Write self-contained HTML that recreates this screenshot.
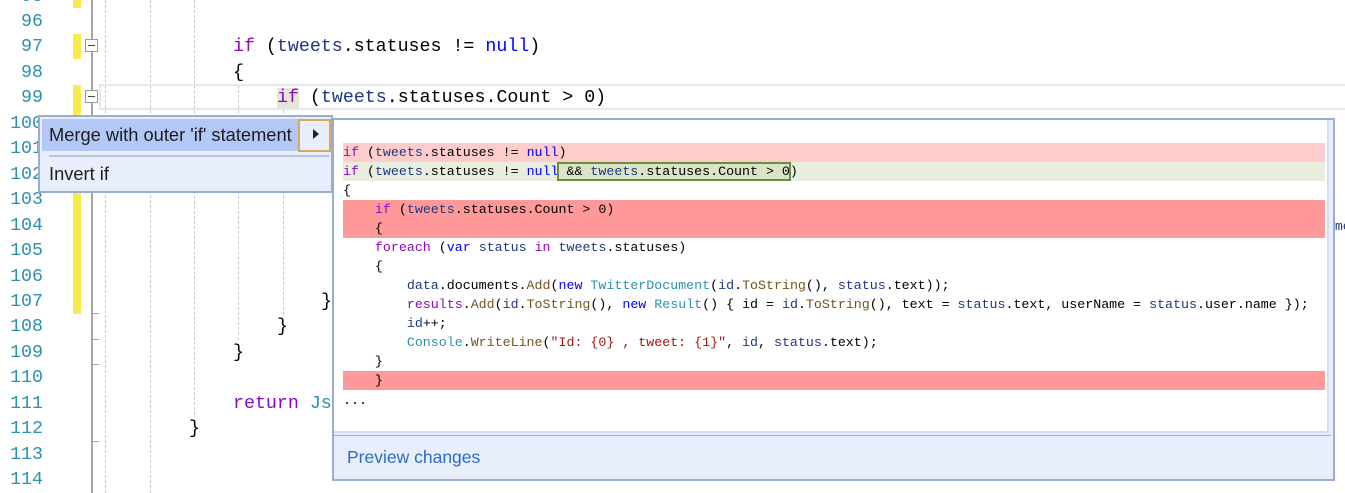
<!DOCTYPE html>
<html><head><meta charset="utf-8"><style>
body{margin:0;width:1345px;height:493px;overflow:hidden;background:#fff;position:relative;font-family:"Liberation Mono",monospace}
.ln{position:absolute;left:0;width:43px;text-align:right;color:#2b91af;font-size:18.3px;line-height:25.45px;height:25.45px}
.c{position:absolute;font-size:18.3px;line-height:25.45px;white-space:pre;color:#000}
.k{color:#8f08c4}.i{color:#1f377f}.b{color:#0000ff}.t{color:#2b91af}.m{color:#74531f}.s{color:#a31515}
.y{position:absolute;left:73px;width:8px;background:#fbe94f}
.g{position:absolute;width:0;border-left:1px dashed #c8c8c8}
.fb{position:absolute;left:85px;width:11px;height:11px;border:1px solid #999;background:#fff}
.fb:after{content:"";position:absolute;left:2px;top:5px;width:7px;height:1px;background:#444}
.p{position:absolute;left:343px;width:982px;font-size:13.3px;line-height:19px;height:19px;white-space:pre;color:#000}
.ui{font-family:"Liberation Sans",sans-serif}
#ed{position:absolute;left:0;top:3px;width:1345px;height:490px}
</style></head><body>
<div id="ed">
<div class="ln" style="top:-18px">95</div>
<div class="ln" style="top:7px">96</div>
<div class="ln" style="top:32px">97</div>
<div class="ln" style="top:58px">98</div>
<div class="ln" style="top:83px">99</div>
<div class="ln" style="top:109px">100</div>
<div class="ln" style="top:134px">101</div>
<div class="ln" style="top:160px">102</div>
<div class="ln" style="top:185px">103</div>
<div class="ln" style="top:211px">104</div>
<div class="ln" style="top:236px">105</div>
<div class="ln" style="top:262px">106</div>
<div class="ln" style="top:287px">107</div>
<div class="ln" style="top:312px">108</div>
<div class="ln" style="top:338px">109</div>
<div class="ln" style="top:363px">110</div>
<div class="ln" style="top:389px">111</div>
<div class="ln" style="top:414px">112</div>
<div class="ln" style="top:440px">113</div>
<div class="ln" style="top:465px">114</div>
<div class="c" style="left:233px;top:32px"><span class="k">if</span> (<span class="i">tweets</span>.statuses != <span class="b">null</span>)</div>
<div class="c" style="left:233px;top:58px">{</div>
<div class="c" style="left:277px;top:83px"><span class="k" style="background:#e2e8d8">if</span> (<span class="i">tweets</span>.statuses.Count &gt; 0)</div>
<div class="c" style="left:321px;top:287px">}</div>
<div class="c" style="left:277px;top:312px">}</div>
<div class="c" style="left:233px;top:338px">}</div>
<div class="c" style="left:233px;top:389px"><span class="k">return</span> <span class="t">Js</span></div>
<div class="c" style="left:189px;top:414px">}</div>
<div class="c" style="left:1335px;top:211px;font-size:13px"><span class="i">me</span></div>
</div>
<!-- yellow bars -->
<div class="y" style="top:0;height:8px"></div>
<div class="y" style="top:34px;height:25px"></div>
<div class="y" style="top:85px;height:25px"></div>
<div class="y" style="top:110px;height:204px"></div>
<!-- gutter line -->
<div style="position:absolute;left:91px;top:0;width:2px;height:493px;background:#a5a5a5"></div>
<div style="position:absolute;left:92px;top:313px;width:7px;height:1px;background:#a5a5a5"></div>
<div style="position:absolute;left:92px;top:339px;width:7px;height:1px;background:#a5a5a5"></div>
<div style="position:absolute;left:92px;top:364px;width:7px;height:1px;background:#a5a5a5"></div>
<div style="position:absolute;left:92px;top:441px;width:7px;height:1px;background:#a5a5a5"></div>
<div class="fb" style="top:39px"></div>
<div class="fb" style="top:90px"></div>
<!-- guides -->
<div class="g" style="left:105px;top:0;height:493px"></div>
<div class="g" style="left:150px;top:0;height:493px"></div>
<div class="g" style="left:194px;top:0;height:415px"></div>
<div class="g" style="left:238px;top:85px;height:255px"></div>
<div class="g" style="left:283px;top:110px;height:205px"></div>
<div style="position:absolute;left:99px;top:84px;width:1260px;height:22px;border:2px solid #e6e6ee"></div>
<!-- preview panel -->
<div style="position:absolute;left:332px;top:118px;width:999px;height:359px;border:2px solid #9cadd3;background:#e8eefb"></div>
<div style="position:absolute;left:334px;top:120px;width:995px;height:313px;background:#fff;border-right:2px solid #d4dcf0;border-bottom:2px solid #d4dcf0;box-sizing:border-box"></div>
<div style="position:absolute;left:334px;top:435px;width:997px;height:1px;background:#9cadd3"></div>
<div class="ui" style="position:absolute;left:347px;top:447px;font-size:17.5px;color:#2b6cc4">Preview changes</div>
<div class="p" style="top:143px;background:#ffcccc"><span class="k">if</span> (<span class="i">tweets</span>.statuses != <span class="b">null</span>)</div>
<div class="p" style="top:162px;background:#e8eedd"><span class="k">if</span> (<span class="i">tweets</span>.statuses != <span class="b">null</span><span style="outline:2px solid #6e8c3c;outline-offset:-1px;background:#dbe4c6;padding:1px 0"> &amp;&amp; <span class="i">tweets</span>.statuses.Count &gt; 0</span>)</div>
<div class="p" style="top:181px">{</div>
<div class="p" style="top:200px;background:#ff9999">    <span class="k">if</span> (<span class="i">tweets</span>.statuses.Count &gt; 0)</div>
<div class="p" style="top:219px;background:#ff9999">    {</div>
<div class="p" style="top:238px">    <span class="k">foreach</span> (<span class="b">var</span> <span class="i">status</span> <span class="k">in</span> <span class="i">tweets</span>.statuses)</div>
<div class="p" style="top:257px">    {</div>
<div class="p" style="top:276px">        <span class="i">data</span>.documents.<span class="m">Add</span>(<span class="b">new</span> <span class="t">TwitterDocument</span>(<span class="i">id</span>.<span class="m">ToString</span>(), <span class="i">status</span>.text));</div>
<div class="p" style="top:295px">        <span class="k">results</span>.<span class="m">Add</span>(<span class="i">id</span>.<span class="m">ToString</span>(), <span class="b">new</span> <span class="t">Result</span>() { id = <span class="i">id</span>.<span class="m">ToString</span>(), text = <span class="i">status</span>.text, userName = <span class="i">status</span>.user.name });</div>
<div class="p" style="top:314px">        <span class="i">id</span>++;</div>
<div class="p" style="top:333px">        <span class="t">Console</span>.<span class="m">WriteLine</span>(<span class="s">"Id: {0} , tweet: {1}"</span>, <span class="i">id</span>, <span class="i">status</span>.text);</div>
<div class="p" style="top:352px">    }</div>
<div class="p" style="top:371px;background:#ff9999">    }</div>
<div class="p" style="top:391px">...</div>
<!-- menu -->
<div class="ui" style="position:absolute;left:38px;top:115px;width:291px;height:74px;border:2px solid #9cadd3;background:#e8eefb">
 <div style="position:absolute;left:2px;top:2px;width:258px;height:32px;background:#b4c8f8"></div>
 <div style="position:absolute;left:258px;top:2px;box-sizing:border-box;width:33px;height:33px;border:2px solid #d6a860"></div>
 <div style="position:absolute;left:273px;top:12px;width:0;height:0;border-left:6px solid #222;border-top:5px solid transparent;border-bottom:5px solid transparent"></div>
 <div style="position:absolute;left:9px;top:7px;font-size:18.3px;color:#1e1e1e">Merge with outer 'if' statement</div>
 <div style="position:absolute;left:9px;top:38px;width:280px;height:2px;background:#b9c4dc"></div>
 <div style="position:absolute;left:9px;top:46px;font-size:18.3px;color:#1e1e1e">Invert if</div>
</div>
</body></html>
